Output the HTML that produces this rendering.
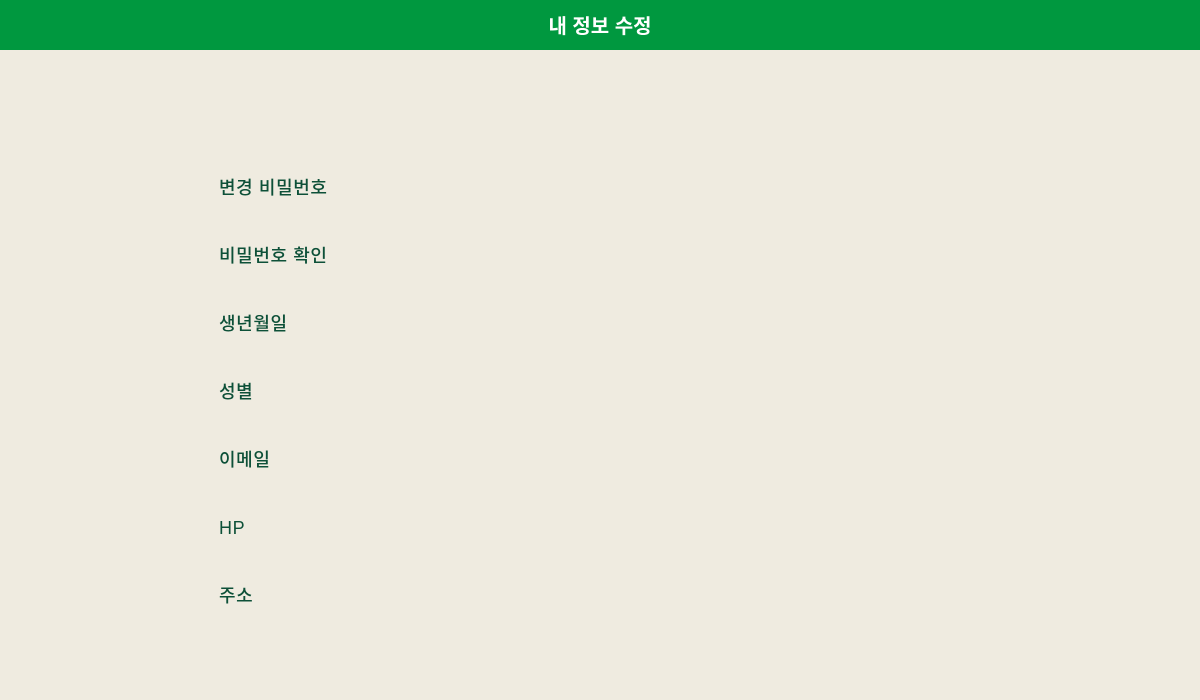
<!DOCTYPE html>
<html><head><meta charset="utf-8"><style>
html,body{margin:0;padding:0;width:1200px;height:700px;background:#efebe0;overflow:hidden;font-family:"Liberation Sans","Noto Sans CJK KR","NanumGothic",sans-serif}
.h{height:50px;background:#00983f;color:#fff;text-align:center;font-size:20px;font-weight:700;line-height:54px}
.l{position:absolute;left:219px;font-size:18px;color:#0d5038;line-height:24px;font-weight:500;letter-spacing:0.6px}
</style></head><body>
<div class="h">내 정보 수정</div>
<div class="l" style="top:176px">변경 비밀번호</div>
<div class="l" style="top:244px">비밀번호 확인</div>
<div class="l" style="top:312px">생년월일</div>
<div class="l" style="top:380px">성별</div>
<div class="l" style="top:448px">이메일</div>
<div class="l" style="top:516px">HP</div>
<div class="l" style="top:584px">주소</div>
</body></html>
